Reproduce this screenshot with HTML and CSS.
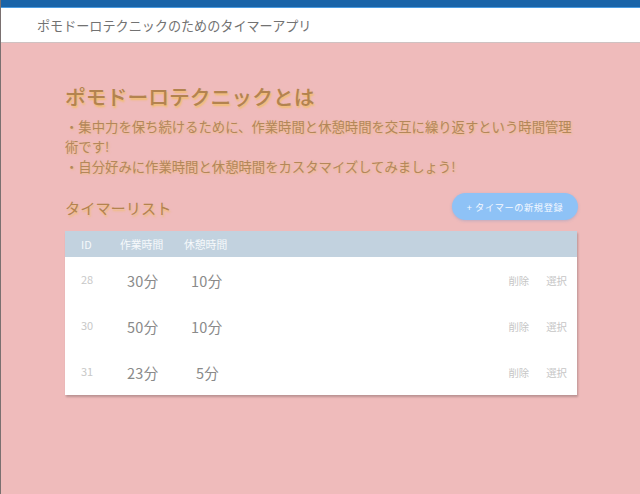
FILE: index.html
```html
<!DOCTYPE html>
<html lang="ja">
<head>
<meta charset="utf-8">
<link rel="stylesheet" href="styles.css">
</head>
<body>
<div class="topbar"></div>
<header class="header">ポモドーロテクニックのためのタイマーアプリ</header>
<main class="main">
  <h1 class="title">ポモドーロテクニックとは</h1>
  <p class="desc">・集中力を保ち続けるために、作業時間と休憩時間を交互に繰り返すという時間管理術です!<br>・自分好みに作業時間と休憩時間をカスタマイズしてみましょう!</p>
  <div class="list-head">
    <h2 class="subtitle">タイマーリスト</h2>
    <button class="new-btn">+ タイマーの新規登録</button>
  </div>
  <div class="card">
    <div class="thead">
      <span class="c-id">ID</span>
      <span class="c-work">作業時間</span>
      <span class="c-rest">休憩時間</span>
    </div>
    <div class="row">
      <span class="c-id id">28</span>
      <span class="c-work val">30分</span>
      <span class="c-rest val">10分</span>
      <span class="actions"><span>削除</span><span>選択</span></span>
    </div>
    <div class="row">
      <span class="c-id id">30</span>
      <span class="c-work val">50分</span>
      <span class="c-rest val">10分</span>
      <span class="actions"><span>削除</span><span>選択</span></span>
    </div>
    <div class="row">
      <span class="c-id id">31</span>
      <span class="c-work val">23分</span>
      <span class="c-rest val r5">5分</span>
      <span class="actions"><span>削除</span><span>選択</span></span>
    </div>
  </div>
</main>
</body>
</html>
```
FILE: styles.css
```css
html, body {
  margin: 0;
  padding: 0;
  height: 100%;
}
body {
  background: #efbbbb;
  font-family: "Noto Sans CJK JP", "Noto Sans", sans-serif;
  border-left: 1px solid #7a7070;
  box-sizing: border-box;
}
.topbar {
  height: 7px;
  background: #1a64a8;
  border-bottom: 1px solid #4a9be0;
}
.header {
  height: 34px;
  background: #fff;
  border-bottom: 1px solid #cfc2c2;
  padding-left: 36px;
  display: flex;
  align-items: center;
  font-size: 13.1px;
  color: #727272;
}
.main {
  width: 512px;
  margin-left: 64px;
  padding-top: 39px;
}
.title {
  margin: 0;
  font-size: 20.8px;
  line-height: 28px;
  font-weight: 500;
  color: #b3834f;
  text-shadow: 1px 2px 2px rgba(242, 190, 80, 0.75);
}
.desc {
  margin: 7px 0 0;
  font-size: 13.35px;
  line-height: 20px;
  color: #b3875a;
  text-shadow: 1px 1px 2px rgba(242, 190, 80, 0.55);
}
.list-head {
  display: flex;
  justify-content: space-between;
  align-items: center;
  margin-top: 16px;
}
.subtitle {
  margin: 0;
  font-size: 15.2px;
  line-height: 24px;
  font-weight: 400;
  color: #b3834f;
  text-shadow: 1px 2px 2px rgba(242, 190, 80, 0.65);
}
.new-btn {
  border: none;
  background: #8ec2f6;
  color: #f4f8ff;
  font-family: inherit;
  font-size: 9.2px;
  letter-spacing: 0.6px;
  height: 27px;
  width: 126px;
  border-radius: 14px;
  box-shadow: 0 1px 3px rgba(120, 150, 200, 0.4);
  padding: 0;
  margin-right: -1px;
}
.card {
  margin-top: 11px;
  background: #fff;
  box-shadow: 1px 2px 2px rgba(0, 0, 0, 0.22);
}
.thead {
  height: 26px;
  background: #c2d2df;
  display: flex;
  align-items: center;
  color: #f6f9fb;
  font-size: 10.8px;
}
.row {
  height: 46px;
  display: flex;
  align-items: center;
}
.c-id {
  width: 55px;
  padding-left: 16px;
  box-sizing: border-box;
}
.c-work {
  width: 64px;
}
.c-rest {
  width: 64px;
}
.row .c-work {
  padding-left: 7px;
  box-sizing: border-box;
}
.row .c-rest {
  padding-left: 7px;
  box-sizing: border-box;
}
.row .r5 {
  padding-left: 12px;
}
.id {
  color: #c8c8c8;
  font-size: 11px;
  align-self: flex-start;
  margin-top: 14px;
}
.val {
  color: #8a8a8a;
  font-size: 14.5px;
  letter-spacing: 0.3px;
  margin-top: 0;
}
.actions {
  margin-left: auto;
  display: flex;
  gap: 17px;
  padding-right: 10px;
  color: #c6c6c6;
  font-size: 10.4px;
}
```
